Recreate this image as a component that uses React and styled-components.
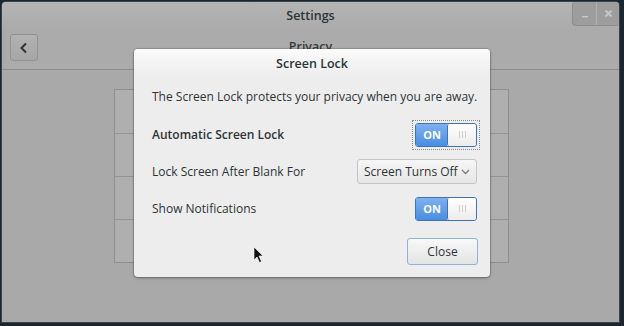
import React from "react";
import styled, { createGlobalStyle } from "styled-components";

const Global = createGlobalStyle`
  html, body { margin: 0; padding: 0; background: #1a2730; }
  body { font-family: "Open Sans", "Noto Sans", sans-serif; color: #2e3436; }
  * { box-sizing: border-box; }
`;

const Screen = styled.div`
  width: 624px;
  height: 326px;
  padding: 2px 5px 4px 2px;
  background: #1a2730;
  position: relative;
  overflow: hidden;
`;

const Window = styled.div`
  width: 100%;
  height: 100%;
  background: #a9a9a9;
  border-radius: 4px 4px 0 0;
  display: flex;
  flex-direction: column;
  position: relative;
  box-shadow: 0 0 0 1px #3b4449;
`;

const TitleBar = styled.div`
  height: 26px;
  position: relative;
  display: flex;
  align-items: center;
  justify-content: center;
  background: linear-gradient(#b4b4b4, #ababab);
  border-radius: 4px 4px 0 0;
`;

const WinTitle = styled.div`
  font-size: 12.5px;
  font-weight: 600;
  color: #2e3436;
`;

const Controls = styled.div`
  position: absolute;
  right: 0;
  top: 0;
  height: 23px;
  display: flex;
  background: #9d9d9d;
  border-radius: 0 3px 0 4px;
  box-shadow: -1px 1px 0 #8c8c8c;
`;

const Ctl = styled.div`
  width: 23px;
  height: 23px;
  display: flex;
  align-items: center;
  justify-content: center;
  & + & { border-left: 1px solid #b1b1b1; }
`;

const Toolbar = styled.div`
  height: 42px;
  display: flex;
  align-items: center;
  padding: 0 8px;
  position: relative;
  border-bottom: 1px solid #8c8c8c;
  background: #ababab;
`;

const BackBtn = styled.div`
  width: 28px;
  height: 27px;
  border: 1px solid #919191;
  border-radius: 3px;
  background: linear-gradient(#b2b2b2, #a6a6a6);
  display: flex;
  align-items: center;
  justify-content: center;
  margin-top: -2px;
`;

const PageTitle = styled.div`
  position: absolute;
  left: 0;
  right: 0;
  top: 10px;
  text-align: center;
  font-size: 12.5px;
  font-weight: 600;
  color: #3a3a3a;
`;

const Content = styled.div`
  flex: 1;
  padding: 19px 0 0 112px;
`;

const ListFrame = styled.div`
  width: 395px;
  border: 1px solid #8e8e8e;
  background: #afafaf;
  display: flex;
  flex-direction: column;
`;

const ListRow = styled.div`
  height: 43px;
  & + & { border-top: 1px solid #959595; }
`;

const Dialog = styled.div`
  position: absolute;
  left: 134px;
  top: 49px;
  width: 356px;
  height: 228px;
  background: #ededed;
  border-radius: 4px;
  box-shadow: 0 1px 3px rgba(0,0,0,0.35), 0 0 0 1px rgba(0,0,0,0.12);
  display: flex;
  flex-direction: column;
`;

const DialogHead = styled.div`
  height: 27px;
  display: flex;
  align-items: center;
  justify-content: center;
  font-size: 12.5px;
  font-weight: 600;
  color: #2e3436;
  background: linear-gradient(#fbfbfb, #ededed);
  border-radius: 4px 4px 0 0;
  padding-top: 2px;
`;

const DialogBody = styled.div`
  flex: 1;
  padding: 12px 13px 12px 18px;
  display: flex;
  flex-direction: column;
`;

const Desc = styled.div`
  font-size: 12px;
  line-height: 18px;
  margin-bottom: 10px;
  white-space: nowrap;
`;

const Row = styled.div`
  height: 37px;
  display: flex;
  align-items: center;
  justify-content: space-between;
`;

const Label = styled.div`
  font-size: 12px;
  font-weight: ${p => (p.$bold ? 600 : 400)};
  color: #2e3436;
  white-space: nowrap;
`;

const Focus = styled.div`
  padding: 2px;
  margin-right: -3px;
  border: 1px dotted ${p => (p.$on ? "#8a8a8a" : "transparent")};
`;

const Switch = styled.div`
  width: 62px;
  height: 24px;
  border: 1px solid #3f73b8;
  border-radius: 3px;
  display: flex;
  overflow: hidden;
`;

const SwOn = styled.div`
  width: 31px;
  display: flex;
  align-items: center;
  justify-content: center;
  color: #fff;
  font-size: 11px;
  font-weight: 700;
  background: linear-gradient(#7eb1f0, #4a8de0);
  padding-left: 1px;
`;

const SwKnob = styled.div`
  flex: 1;
  background: linear-gradient(#ffffff, #ececec);
  border-left: 1px solid #3f73b8;
  border-radius: 2px;
  display: flex;
  align-items: center;
  justify-content: center;
  gap: 2px;
`;

const Grip = styled.span`
  width: 1px;
  height: 7px;
  background: #cfcfcf;
`;

const Combo = styled.div`
  width: 120px;
  height: 25px;
  border: 1px solid #c4c4c4;
  border-radius: 3px;
  background: linear-gradient(#f6f6f6, #e6e6e6);
  display: flex;
  align-items: center;
  justify-content: space-between;
  padding: 0 6px 0 6px;
  font-size: 12px;
  color: #2e3436;
  white-space: nowrap;
`;

const Footer = styled.div`
  margin-top: auto;
  display: flex;
  justify-content: flex-end;
`;

const Button = styled.div`
  width: 71px;
  height: 27px;
  border: 1px solid #8fb2d8;
  border-radius: 3px;
  background: linear-gradient(#f8f8f8, #e4e4e4);
  display: flex;
  align-items: center;
  justify-content: center;
  font-size: 12px;
  color: #2e3436;
  margin-right: -1px;
`;

const Cursor = styled.svg`
  position: absolute;
  left: 253px;
  top: 246px;
`;

const ToggleSwitch = ({ focused }) => (
  <Focus $on={focused}>
    <Switch>
      <SwOn>ON</SwOn>
      <SwKnob>
        <Grip />
        <Grip />
        <Grip />
      </SwKnob>
    </Switch>
  </Focus>
);

export default function App() {
  return (
    <>
      <Global />
      <Screen>
        <Window>
          <TitleBar>
            <WinTitle>Settings</WinTitle>
            <Controls>
              <Ctl>
                <svg width="8" height="8" viewBox="0 0 8 8">
                  <rect x="1" y="6" width="6" height="1.4" fill="#c8c8c8" />
                </svg>
              </Ctl>
              <Ctl>
                <svg width="9" height="9" viewBox="0 0 9 9">
                  <path d="M1.5 1.5 L7.5 7.5 M7.5 1.5 L1.5 7.5" stroke="#c8c8c8" strokeWidth="1.8" />
                </svg>
              </Ctl>
            </Controls>
          </TitleBar>
          <Toolbar>
            <BackBtn>
              <svg width="10" height="12" viewBox="0 0 10 12">
                <path d="M7 1.5 L2.5 6 L7 10.5" fill="none" stroke="#2e3436" strokeWidth="2" />
              </svg>
            </BackBtn>
            <PageTitle>Privacy</PageTitle>
          </Toolbar>
          <Content>
            <ListFrame>
              <ListRow />
              <ListRow />
              <ListRow />
              <ListRow />
            </ListFrame>
          </Content>
        </Window>
        <Dialog>
          <DialogHead>Screen Lock</DialogHead>
          <DialogBody>
            <Desc>The Screen Lock protects your privacy when you are away.</Desc>
            <Row>
              <Label $bold>Automatic Screen Lock</Label>
              <ToggleSwitch focused />
            </Row>
            <Row>
              <Label>Lock Screen After Blank For</Label>
              <Combo>
                <span>Screen Turns Off</span>
                <svg width="9" height="6" viewBox="0 0 9 6">
                  <path d="M1 1 L4.5 4.5 L8 1" fill="none" stroke="#7a7a7a" strokeWidth="1.3" />
                </svg>
              </Combo>
            </Row>
            <Row>
              <Label>Show Notifications</Label>
              <ToggleSwitch />
            </Row>
            <Footer>
              <Button>Close</Button>
            </Footer>
          </DialogBody>
        </Dialog>
        <Cursor width="12" height="18" viewBox="0 0 12 18">
          <path d="M1 1 L1 14 L4 11 L6.5 16.5 L8.5 15.5 L6 10 L10 10 Z" fill="#111" stroke="#fff" strokeWidth="0.6" />
        </Cursor>
      </Screen>
    </>
  );
}
